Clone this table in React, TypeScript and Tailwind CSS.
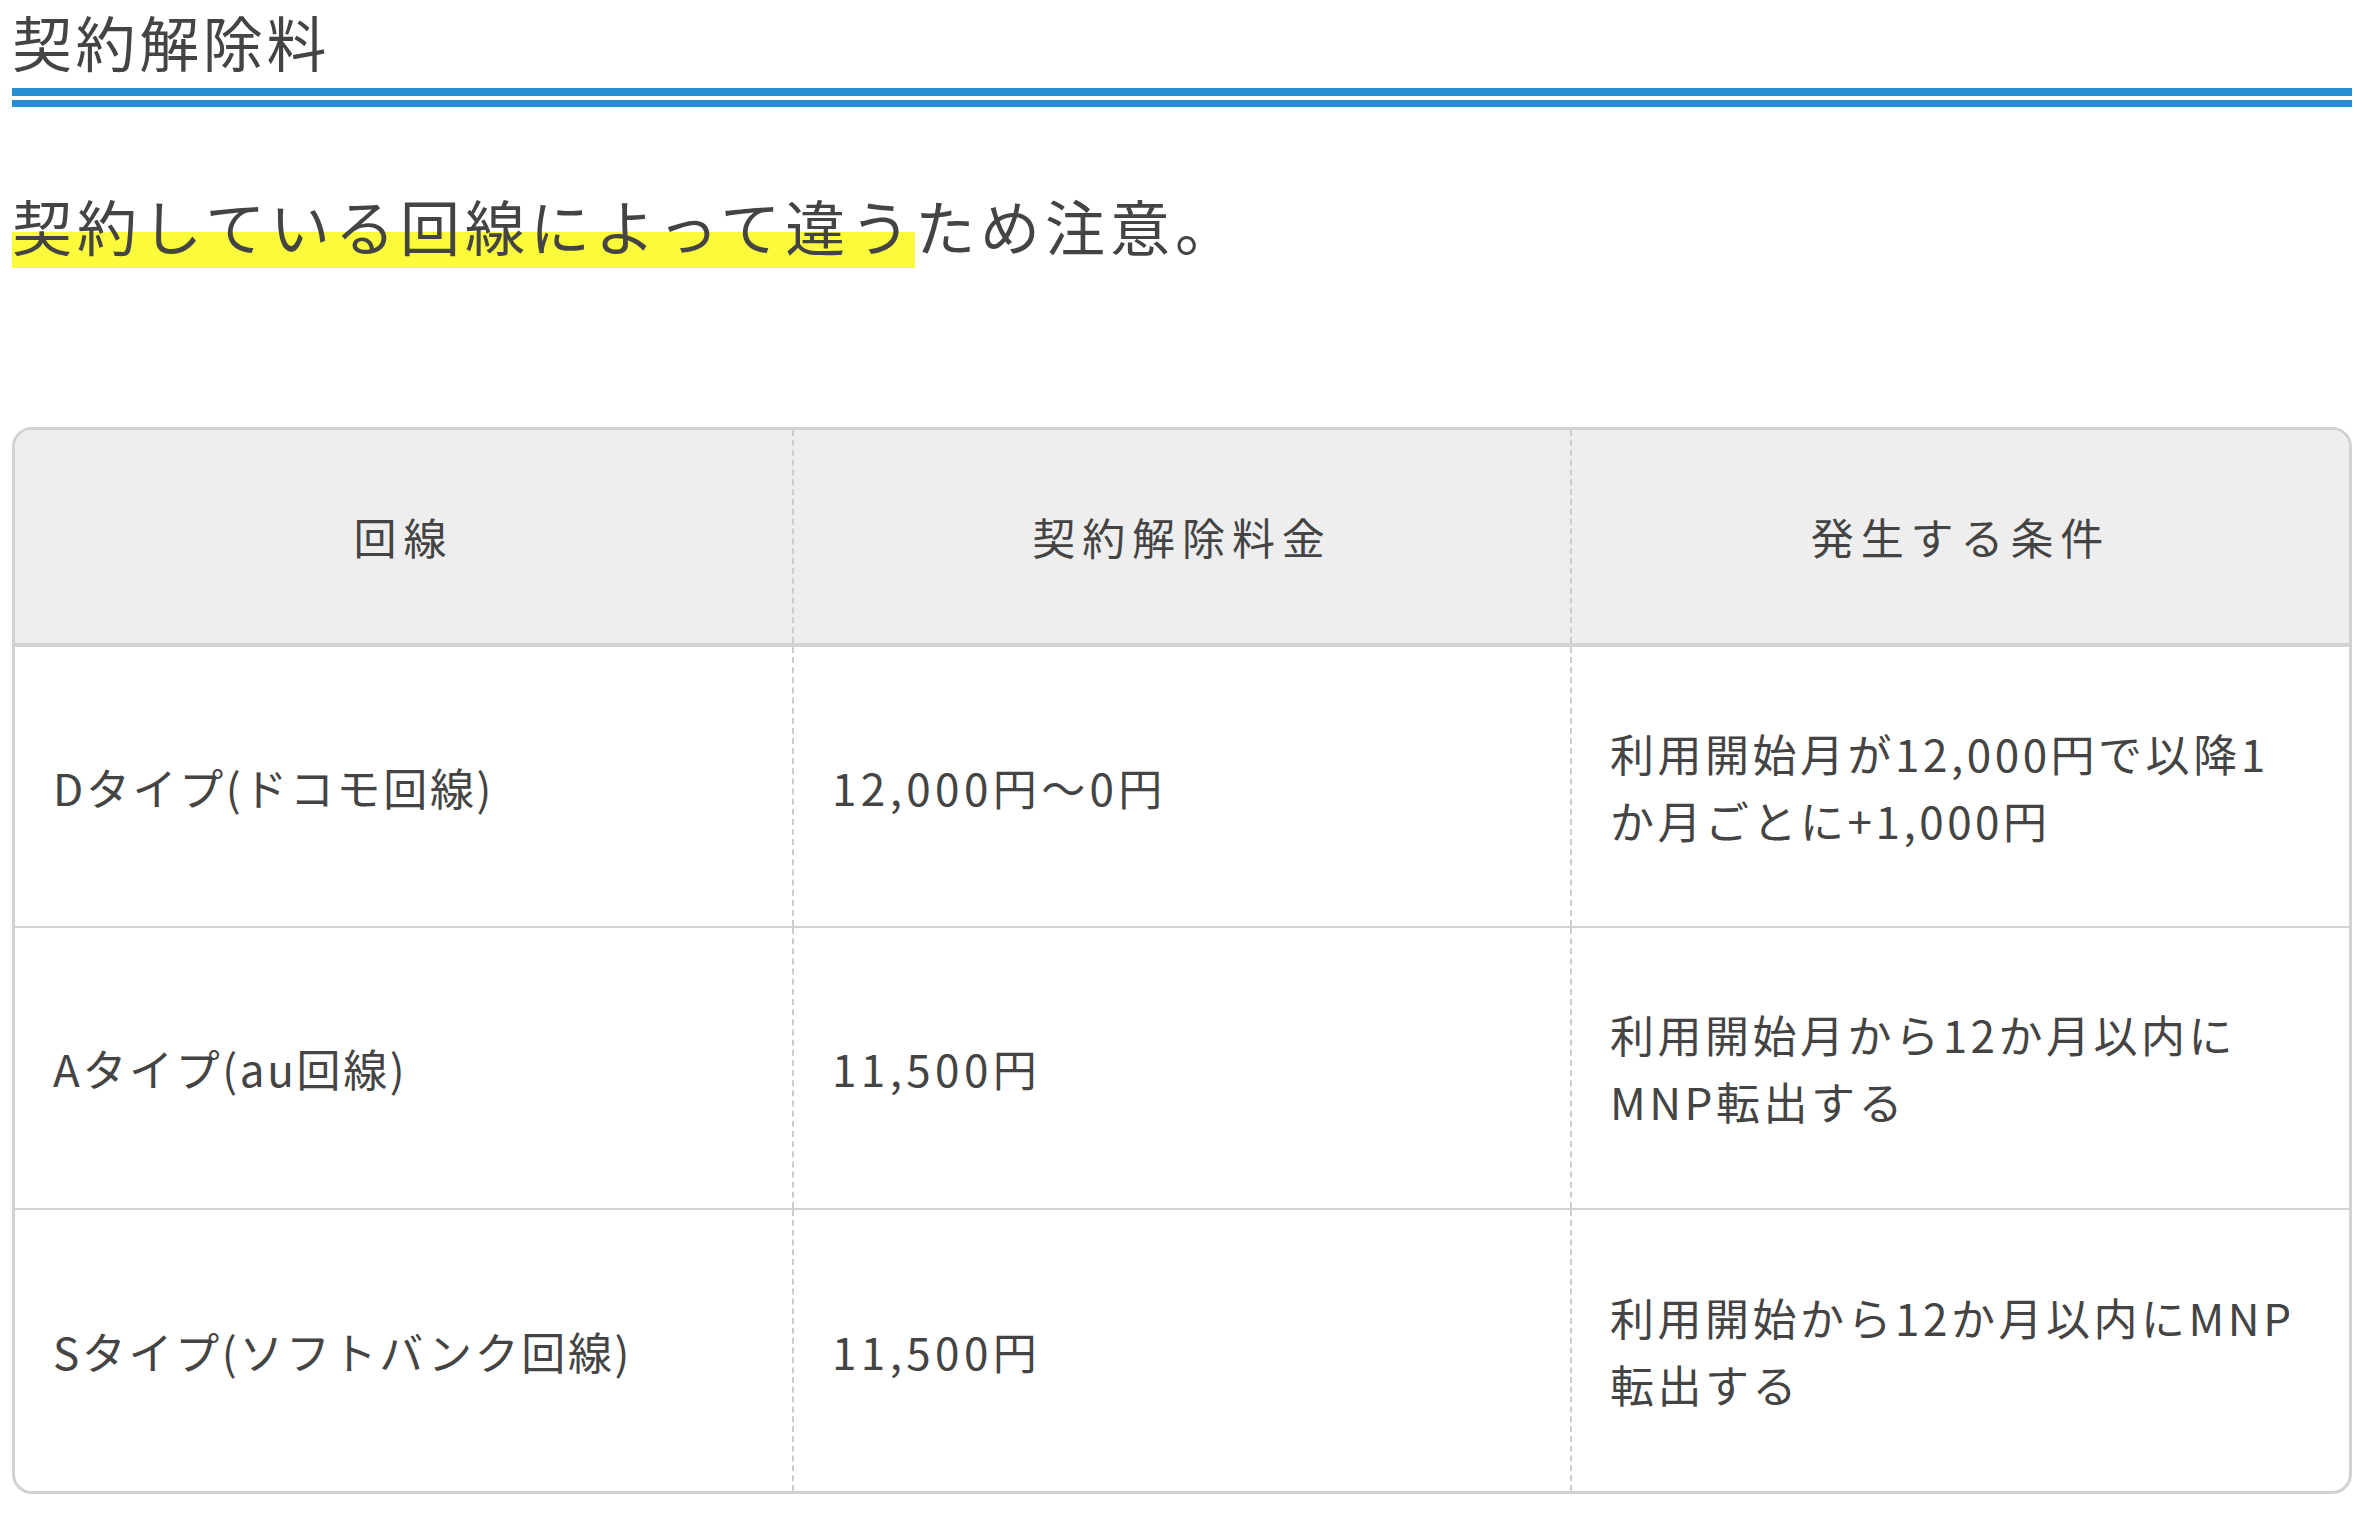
import React from 'react';

const font = { fontFamily: '"Noto Sans CJK JP", "Noto Sans", sans-serif' };

interface Row {
  line: string;
  fee: string;
  cond: string[];
}

const rows: Row[] = [
  { line: 'Dタイプ(ドコモ回線)', fee: '12,000円〜0円', cond: ['利用開始月が12,000円で以降1', 'か月ごとに+1,000円'] },
  { line: 'Aタイプ(au回線)', fee: '11,500円', cond: ['利用開始月から12か月以内に', 'MNP転出する'] },
  { line: 'Sタイプ(ソフトバンク回線)', fee: '11,500円', cond: ['利用開始から12か月以内にMNP', '転出する'] },
];

const headers = ['回線', '契約解除料金', '発生する条件'];

export default function App() {
  return (
    <div className="min-h-screen bg-white pl-3 pr-6 text-[#444]" style={font}>
      <h2 className="text-[60px] leading-none tracking-[0.06em] pt-[11px] text-[#444] font-normal">契約解除料</h2>
      <div className="mt-[17px] h-[8px] bg-[#268fd4]" />
      <div className="mt-[4px] h-[7px] bg-[#268fd4]" />

      <p className="mt-[88px] text-[60px] leading-none tracking-[0.083em]">
        <span className="bg-[linear-gradient(#fbfb3c,#fbfb3c)] bg-no-repeat bg-[length:100%_36px] bg-bottom">契約している回線によって違う</span>
        ため注意。
      </p>

      <div className="mt-[172px] rounded-[20px] border-[3px] border-[#d2d2d2] overflow-hidden">
        <table className="w-full table-fixed border-collapse">
          <thead>
            <tr className="bg-[#eeeeee] border-b-[4px] border-[#d2d2d2]">
              {headers.map((h, i) => (
                <th
                  key={h}
                  className={`h-[215px] text-center font-normal text-[43px] tracking-[0.16em] ${i < 2 ? 'border-r-2 border-dashed border-r-[#cccccc]' : ''}`}
                >
                  {h}
                </th>
              ))}
            </tr>
          </thead>
          <tbody>
            {rows.map((r, idx) => (
              <tr key={r.line} className={idx < rows.length - 1 ? 'border-b-2 border-[#d2d2d2]' : ''}>
                <td className="h-[282px] pl-[38px] pr-[20px] text-[44px] tracking-[0.06em] whitespace-nowrap border-r-2 border-dashed border-r-[#cccccc]">{r.line}</td>
                <td className="h-[282px] pl-[38px] pr-[20px] text-[44px] tracking-[0.1em] whitespace-nowrap border-r-2 border-dashed border-r-[#cccccc]">{r.fee}</td>
                <td className="h-[282px] pl-[38px] pr-[10px] text-[44px] leading-[67px] tracking-[0.08em] whitespace-nowrap">
                  {r.cond[0]}
                  <br />
                  {r.cond[1]}
                </td>
              </tr>
            ))}
          </tbody>
        </table>
      </div>
    </div>
  );
}
